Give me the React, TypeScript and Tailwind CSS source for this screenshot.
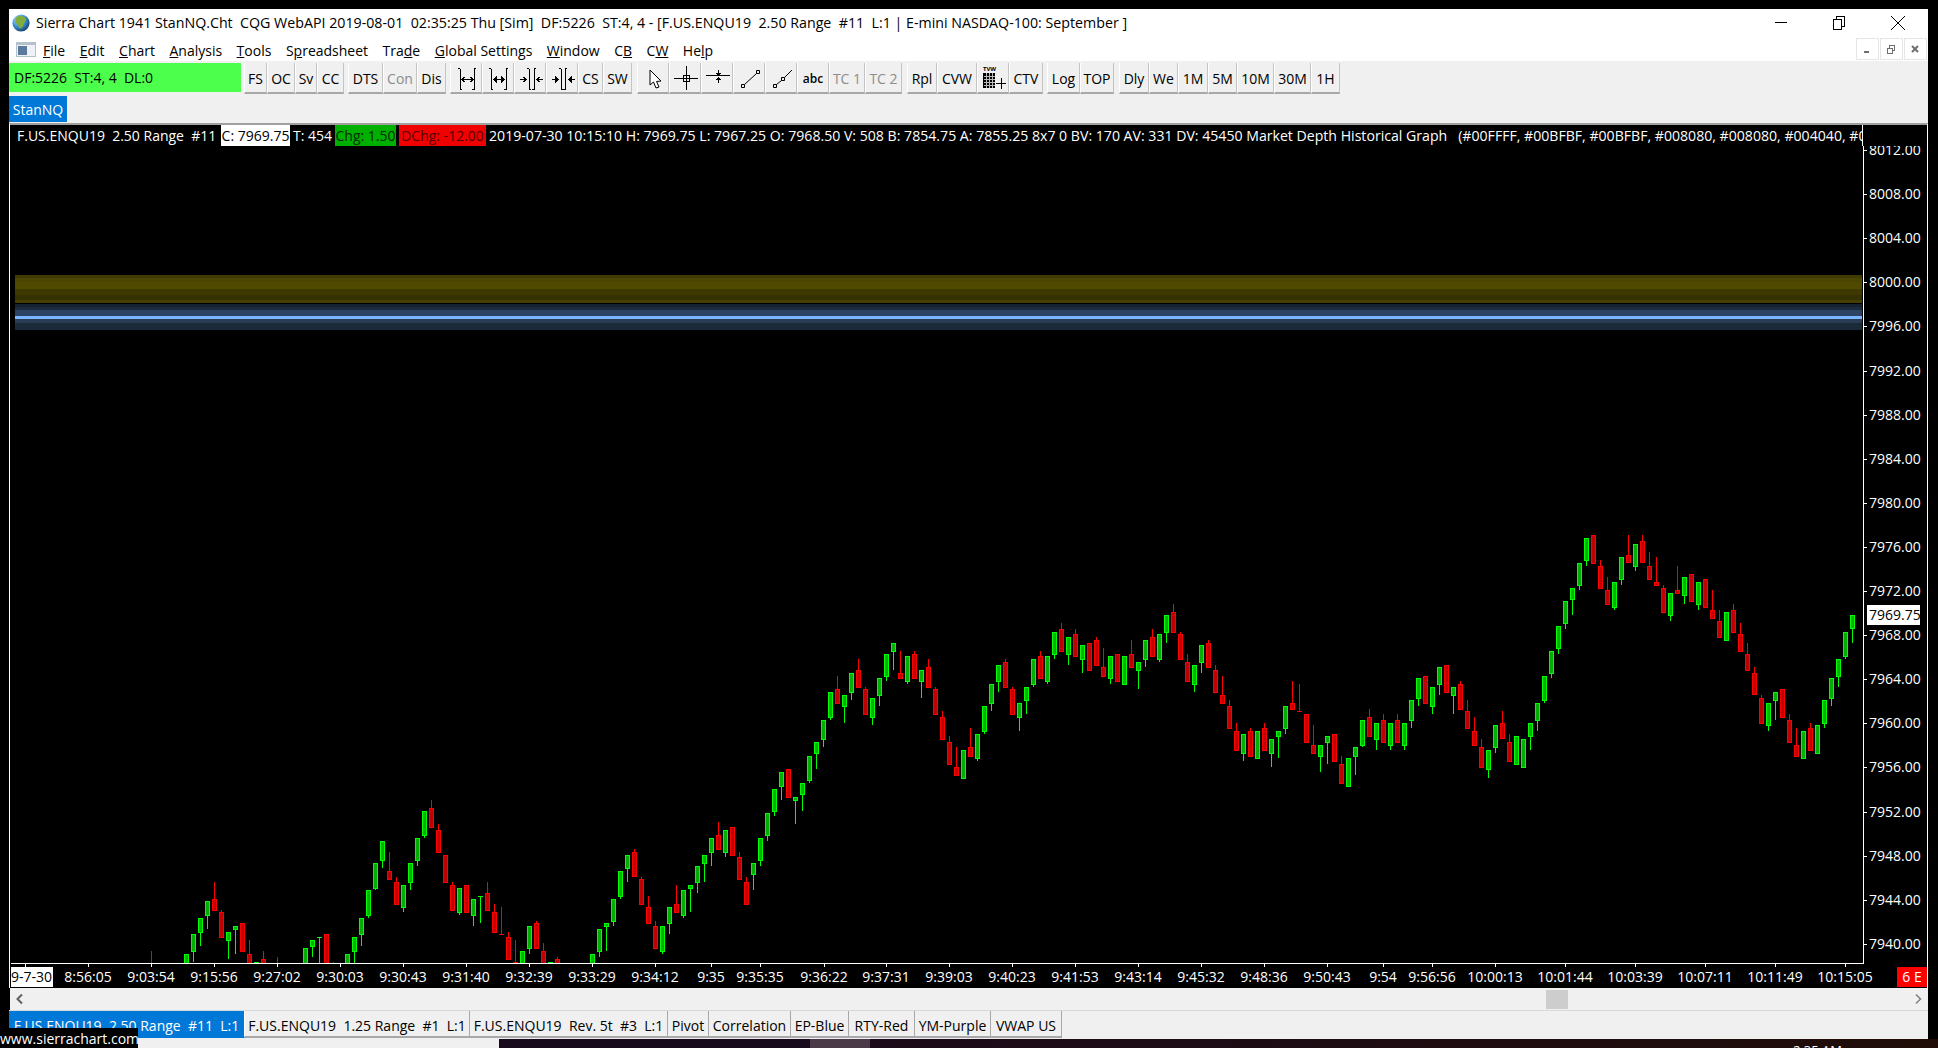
type Row = [number, number, number, number, number] | null;

// g, wickTop, bodyTop, bodyBottom, wickBottom: read off the chart in crop coordinates
const early: Row[] = [
  [0, 513, 600, 600, 600], null, null, null, null,
  [1, 523, 523, 600, 600], [1, 463, 463, 515, 545], [1, 415, 415, 458, 497], [1, 364, 364, 407, 446],
  [0, 306, 358, 392, 392], [0, 390, 397, 473, 473], [1, 457, 457, 482, 537], [1, 439, 439, 449, 521],
  [0, 430, 430, 515, 515], [0, 480, 523, 600, 600], [1, 547, 547, 600, 600], [0, 513, 538, 600, 600], null,
  [0, 531, 600, 600, 600], null, null, null,
  [1, 505, 505, 600, 600], [1, 481, 481, 500, 530], [1, 472, 472, 472, 600], [0, 463, 463, 600, 600],
  [0, 546, 600, 600, 600], null,
  [1, 523, 523, 600, 600], [1, 472, 472, 515, 600], [1, 415, 415, 464, 497], [1, 331, 331, 407, 413],
  [1, 250, 250, 326, 329], [1, 184, 184, 242, 263], [0, 216, 274, 299, 299], [0, 292, 307, 374, 374],
  [1, 316, 316, 383, 395], [1, 250, 250, 308, 329], [1, 175, 175, 242, 257], [1, 94, 94, 167, 173],
  [0, 60, 85, 143, 143], [0, 133, 151, 218, 218], [0, 226, 226, 308, 308], [0, 307, 316, 392, 392],
  [1, 325, 325, 398, 404], [0, 316, 316, 398, 398], [1, 358, 358, 407, 437], [1, 349, 349, 349, 428],
  [0, 306, 340, 392, 392], [0, 373, 397, 458, 458], [0, 381, 463, 463, 463], [0, 457, 472, 539, 539],
  [0, 480, 547, 600, 600], [1, 514, 514, 600, 600], [1, 439, 439, 506, 521], [0, 424, 430, 506, 506],
  [0, 489, 514, 600, 600], [1, 547, 547, 600, 600], [0, 531, 538, 600, 600], null, null, null, null,
  [1, 523, 523, 600, 600], [1, 448, 448, 515, 530], [1, 430, 430, 440, 512], [1, 358, 358, 425, 437],
  [1, 274, 274, 350, 356], [1, 226, 226, 266, 305], [0, 208, 217, 292, 292], [0, 292, 298, 374, 374],
  [0, 349, 382, 431, 431],
];

const dip: Row[] = [
  [0, 213, 229, 296, 296], [1, 229, 229, 305, 311], [1, 172, 172, 221, 251], [0, 106, 163, 188, 188],
  [1, 121, 121, 197, 203], [1, 106, 106, 116, 185], [1, 49, 49, 98, 128], [1, 16, 16, 41, 95],
];

const rise: Row[] = [
  [1, 655, 655, 698, 737], [0, 606, 646, 689, 689], [1, 631, 631, 698, 710], [0, 622, 622, 707, 707],
  [0, 696, 712, 779, 779], [0, 771, 787, 854, 854], [1, 730, 730, 764, 809],
  [1, 655, 655, 722, 737], [1, 580, 580, 647, 662], [1, 508, 508, 575, 587], [1, 457, 457, 500, 539],
  [0, 448, 448, 533, 533], [1, 532, 532, 542, 611], [1, 490, 490, 524, 572], [1, 409, 409, 482, 488],
  [1, 367, 367, 401, 446], [1, 301, 301, 359, 380], [1, 217, 217, 293, 299], [0, 168, 208, 251, 251],
  [1, 226, 226, 260, 308], [1, 160, 160, 218, 239], [0, 118, 151, 203, 203], [0, 202, 208, 284, 284],
  [1, 235, 235, 293, 314], [1, 175, 175, 227, 257], [1, 103, 103, 170, 182], [1, 70, 70, 95, 149],
  [0, 94, 160, 176, 176], [1, 109, 109, 185, 191], [0, 94, 103, 176, 176], [1, 151, 151, 185, 233],
  [0, 118, 142, 203, 203], [0, 202, 208, 284, 284], [0, 274, 292, 359, 359], [0, 349, 367, 434, 434],
  [0, 381, 442, 467, 467], [1, 391, 391, 476, 476], [0, 324, 382, 410, 410], [1, 343, 343, 416, 422],
  [1, 259, 259, 335, 341], [1, 193, 193, 251, 272], [1, 136, 136, 185, 215], [0, 118, 127, 203, 203],
  [0, 202, 208, 284, 284], [1, 250, 250, 293, 332], [1, 202, 202, 242, 281], [1, 118, 118, 194, 200],
  [0, 94, 109, 176, 176], [1, 109, 109, 185, 191], [1, 37, 37, 104, 116], [0, 10, 28, 95, 95],
  [1, 52, 52, 104, 134], [0, 28, 43, 110, 110], [1, 76, 76, 119, 158], [0, 70, 70, 152, 152],
  [0, 52, 61, 137, 137],
];

const mid: Row[] = [
  [0, 174, 232, 260, 260], [1, 199, 199, 266, 281], [0, 193, 193, 275, 275], [1, 199, 199, 284, 284],
  [0, 151, 193, 233, 233], [1, 217, 217, 242, 296], [1, 151, 151, 209, 230], [0, 118, 142, 200, 200],
  [1, 133, 133, 209, 215], [1, 76, 76, 128, 158], [0, 42, 67, 128, 128], [0, 127, 133, 209, 209],
  [0, 193, 217, 275, 275], [1, 226, 226, 284, 305], [1, 166, 166, 218, 248], [0, 151, 160, 233, 233],
  [0, 226, 241, 308, 308], [0, 258, 316, 341, 341], [0, 331, 349, 416, 416], [0, 400, 424, 482, 482],
  [1, 433, 433, 491, 512], [0, 415, 424, 500, 500], [1, 424, 424, 506, 506], [0, 400, 415, 482, 482],
  [1, 448, 448, 491, 530], [1, 424, 424, 440, 503], [1, 349, 349, 416, 431], [0, 273, 340, 359, 359],
  [0, 282, 364, 364, 364], [0, 373, 373, 458, 458], [0, 406, 466, 491, 491], [1, 466, 466, 500, 545],
  [1, 439, 439, 458, 521], [0, 433, 433, 515, 515], [0, 499, 523, 581, 581], [1, 505, 505, 590, 590],
  [1, 472, 472, 500, 554], [1, 391, 391, 467, 470], [0, 358, 382, 440, 440], [1, 400, 400, 449, 479],
  [0, 373, 391, 458, 458], [1, 400, 400, 467, 479], [0, 373, 391, 458, 458], [1, 400, 400, 467, 479],
  [1, 331, 331, 392, 413], [1, 265, 265, 326, 347], [0, 259, 259, 341, 341], [1, 292, 292, 350, 371],
  [1, 232, 232, 284, 314], [0, 226, 226, 308, 308], [1, 292, 292, 317, 371], [0, 274, 283, 359, 359],
  [0, 331, 364, 416, 416], [0, 382, 424, 467, 467], [0, 448, 472, 533, 533], [1, 481, 481, 539, 563],
  [1, 406, 406, 473, 488],
];

const late: Row[] = [
  [0, 573, 610, 658, 658], [0, 643, 667, 725, 725], [1, 649, 649, 734, 734], [1, 658, 658, 743, 743],
  [1, 610, 610, 650, 689], [1, 550, 550, 602, 632], [1, 469, 469, 542, 548], [1, 394, 394, 461, 473],
  [1, 319, 319, 386, 401], [1, 244, 244, 311, 326], [1, 205, 205, 239, 284], [1, 130, 130, 197, 209],
  [1, 55, 55, 122, 137], [0, 46, 46, 131, 131], [0, 121, 139, 206, 206], [0, 172, 211, 254, 254],
  [1, 187, 187, 263, 269], [1, 112, 112, 179, 194], [0, 46, 106, 130, 130], [1, 73, 73, 140, 152],
  [0, 46, 64, 130, 130], [0, 97, 139, 179, 179], [0, 112, 187, 197, 197], [0, 196, 205, 278, 278],
  [1, 220, 220, 287, 302], [0, 139, 211, 221, 221], [1, 172, 172, 229, 251], [0, 163, 163, 245, 245],
  [1, 187, 187, 254, 269], [0, 178, 178, 263, 263], [0, 211, 271, 296, 296], [0, 271, 304, 353, 353],
  [1, 277, 277, 362, 362], [0, 253, 271, 338, 338], [0, 310, 343, 395, 395], [0, 370, 403, 452, 452],
  [0, 442, 460, 526, 526], [0, 526, 535, 611, 611], [1, 550, 550, 617, 632], [1, 517, 517, 542, 599],
  [0, 508, 508, 593, 593], [0, 583, 601, 668, 668], [0, 625, 676, 710, 710], [1, 634, 634, 716, 716],
  [0, 610, 625, 692, 692], [1, 616, 616, 701, 701], [1, 541, 541, 611, 623], [1, 475, 475, 536, 557],
  [1, 418, 418, 470, 500], [1, 337, 337, 410, 416], [1, 286, 286, 328, 368],
];

function Candles({ rows, start, base }: { rows: Row[]; start: number; base: number }) {
  return (
    <>
      {rows.map((r, k) => {
        if (!r) return null;
        const left = 149 + 7 * (start + k);
        const y = (v: number) => Math.round(base + v / 3);
        const top = y(r[2]);
        const h = Math.max(1, y(r[3]) - top);
        const edge = r[0] ? '#00ff00' : '#ff0000';
        const fill = r[0] ? '#00b000' : '#c00000';
        return (
          <g key={k}>
            <rect x={left + 2} y={y(r[1])} width={1} height={Math.max(0, y(r[4]) - y(r[1]))} fill={edge} />
            <rect x={left} y={top} width={5} height={h} fill={edge} />
            {h > 2 && <rect x={left + 1} y={top + 1} width={3} height={h - 2} fill={fill} />}
          </g>
        );
      })}
    </>
  );
}

const priceLabels = ['8012.00', '8008.00', '8004.00', '8000.00', '7996.00', '7992.00', '7988.00', '7984.00', '7980.00', '7976.00', '7972.00', '7968.00', '7964.00', '7960.00', '7956.00', '7952.00', '7948.00', '7944.00', '7940.00'];

const timeLabels: [string, number][] = [
  ['8:56:05', 88], ['9:03:54', 151], ['9:15:56', 214], ['9:27:02', 277], ['9:30:03', 340], ['9:30:43', 403],
  ['9:31:40', 466], ['9:32:39', 529], ['9:33:29', 592], ['9:34:12', 655], ['9:35', 711], ['9:35:35', 760],
  ['9:36:22', 824], ['9:37:31', 886], ['9:39:03', 949], ['9:40:23', 1012], ['9:41:53', 1075], ['9:43:14', 1138],
  ['9:45:32', 1201], ['9:48:36', 1264], ['9:50:43', 1327], ['9:54', 1383], ['9:56:56', 1432], ['10:00:13', 1495],
  ['10:01:44', 1565], ['10:03:39', 1635], ['10:07:11', 1705], ['10:11:49', 1775], ['10:15:05', 1845],
];

const bands: [number, number, string][] = [
  [275, 278, '#3f3a00'], [278, 282, '#4a4500'], [282, 289, '#4f4a00'], [289, 295, '#3d3900'], [295, 300, '#353100'], [300, 303, '#454000'],
  [304, 307, '#162230'], [307, 310, '#1e2c40'], [310, 316, '#2b4263'], [316, 319, '#78b4ff'],
  [319, 323, '#2a3c54'], [323, 330, '#1b2a38'],
];

function Chart() {
  return (
    <svg viewBox="10 146 1917 842" className="block w-[1917px] h-[842px]" shapeRendering="crispEdges">
      <defs>
        <clipPath id="plot">
          <rect x="10" y="146" width="1853" height="817" />
        </clipPath>
      </defs>
      {bands.map(([a, b, c]) => (
        <rect key={a} x="15" y={a} width="1847" height={b - a} fill={c} />
      ))}
      <g clipPath="url(#plot)">
        <Candles rows={early} start={0} base={780} />
        <Candles rows={dip} start={72} base={850} />
        <Candles rows={rise} start={80} base={620} />
        <Candles rows={mid} start={136} base={590} />
        <Candles rows={late} start={193} base={520} />
      </g>
      <rect x="1863" y="146" width="1" height="818" fill="#fff" />
      <rect x="11" y="963" width="1853" height="1" fill="#fff" />
      {priceLabels.map((p, i) => (
        <g key={p}>
          <rect x="1864" y={Math.round(150 + i * 44.1)} width="3" height="1" fill="#fff" />
          <text x="1869" y={155 + i * 44.1} fontSize="14" fill="#fff" shapeRendering="auto">{p}</text>
        </g>
      ))}
      <rect x="1867" y="605" width="53" height="20" fill="#fff" />
      <text x="1869" y="620" fontSize="14" fill="#000">7969.75</text>

      <rect x="25" y="963" width="1" height="4" fill="#fff" />
      {timeLabels.map(([t, x]) => (
        <g key={t}>
          <rect x={x} y="963" width="1" height="4" fill="#fff" />
          <text x={x} y="982" fontSize="14" fill="#fff" textAnchor="middle">{t}</text>
        </g>
      ))}
      <rect x="11" y="967" width="42" height="20" fill="#fff" />
      <text x="52" y="982" fontSize="14" fill="#000" textAnchor="end">2019-7-30</text>
      <rect x="1897" y="967" width="30" height="20" fill="#ff0000" />
      <text x="1912" y="982" fontSize="14" fill="#fff" textAnchor="middle">6 E</text>
    </svg>
  );
}

function Globe() {
  return (
    <svg width="18" height="18" viewBox="0 0 18 18" className="shrink-0">
      <defs>
        <radialGradient id="sea" cx="35%" cy="30%" r="75%">
          <stop offset="0%" stopColor="#bfe6ff" />
          <stop offset="55%" stopColor="#3b8fd0" />
          <stop offset="100%" stopColor="#123f6e" />
        </radialGradient>
      </defs>
      <circle cx="9" cy="9" r="8.6" fill="url(#sea)" />
      <path d="M5 2.5 C8 1.5 12 2 14 4.5 C15 7 12 8 11.5 10.5 C11 13 9 15.5 7.5 14 C7 11.5 4.5 10.5 3.5 8.5 C3 6 3.5 4 5 2.5 Z" fill="#7fae3a" />
    </svg>
  );
}

const stroke = { stroke: '#000', strokeWidth: 1, fill: 'none' };

function Bars({ a, b }: { a: number; b: number }) {
  return (
    <>
      <path d={`M${a + 0.5} 6.5V27.5M${a - 2} 6.5H${a}M${a} 27.5H${a + 2}`} {...stroke} />
      <path d={`M${b + 0.5} 6.5V27.5M${b - 2} 27.5H${b}M${b} 6.5H${b + 2}`} {...stroke} />
    </>
  );
}

const icons: Record<string, React.ReactNode> = {
  width: (
    <>
      <Bars a={10} b={24} />
      <path d="M12 17.5H23M14.5 15L12 17.5L14.5 20M20.5 15L23 17.5L20.5 20" {...stroke} />
    </>
  ),
  widthSolid: (
    <>
      <Bars a={9} b={24} />
      <path d="M14 17.5H20" {...stroke} />
      <path d="M11 17.5L15 14V21ZM23 17.5L19 14V21Z" fill="#000" />
    </>
  ),
  narrow: (
    <>
      <Bars a={15} b={20} />
      <path d="M6 17.5H12M9.5 15L12 17.5L9.5 20M29 17.5H23M25.5 15L23 17.5L25.5 20" {...stroke} />
    </>
  ),
  narrowSolid: (
    <>
      <Bars a={15} b={19} />
      <path d="M6 17.5H10M26 17.5H29" {...stroke} />
      <path d="M13 17.5L9 14V21ZM22 17.5L26 14V21Z" fill="#000" />
    </>
  ),
  pointer: <path d="M13 8V23L16.5 20L19 26L22 25L19.5 19.5L24 19Z" stroke="#000" fill="#fff" shapeRendering="auto" />,
  cross: <path d="M5 16.5H29M17.5 4V28M14.5 13.5H20.5V19.5H14.5Z" {...stroke} />,
  level: <path d="M5 13.5H29M17.5 8V13M15.5 11L17.5 13L19.5 11M17.5 16V21M15.5 18L17.5 16L19.5 18" {...stroke} />,
  line: <path d="M8.5 22.5H11.5V25.5H8.5ZM23.5 8.5H26.5V11.5H23.5ZM11.5 22.5L23.5 11.5" {...stroke} shapeRendering="auto" />,
  ray: <path d="M8.5 22.5H11.5V25.5H8.5ZM16.5 15.5H19.5V18.5H16.5ZM11.5 22.5L16.5 18.5M19.5 15.5L27 8" {...stroke} shapeRendering="auto" />,
  table: (
    <>
      <text x="6" y="9" fontSize="6" fontWeight="700" fill="#000">TVW</text>
      <rect x="6" y="11" width="12" height="15" fill="#000" />
      <path d="M6.5 14.5H18M6.5 17.5H18M6.5 20.5H18M6.5 23.5H18M9.5 11V26M12.5 11V26M15.5 11V26" stroke="#bbb" strokeWidth="1" />
      <path d="M19 21.5H29M24.5 16V27" {...stroke} />
    </>
  ),
};

type Btn = { t?: string; i?: string; w: number; dim?: boolean; small?: boolean };

const groups: Btn[][] = [
  [{ t: 'FS', w: 23 }, { t: 'OC', w: 28 }, { t: 'Sv', w: 22 }, { t: 'CC', w: 27 }],
  [{ t: 'DTS', w: 35 }, { t: 'Con', w: 34, dim: true }, { t: 'Dis', w: 29 }],
  [{ i: 'width', w: 32 }, { i: 'widthSolid', w: 32 }, { i: 'narrow', w: 32 }, { i: 'narrowSolid', w: 32 }, { t: 'CS', w: 25 }, { t: 'SW', w: 29 }],
  [{ i: 'pointer', w: 32 }, { i: 'cross', w: 32 }, { i: 'level', w: 32 }, { i: 'line', w: 32 }, { i: 'ray', w: 32 }, { t: 'abc', w: 32, small: true }, { t: 'TC 1', w: 36, dim: true }, { t: 'TC 2', w: 37, dim: true }],
  [{ t: 'Rpl', w: 30 }, { t: 'CVW', w: 40 }, { i: 'table', w: 32 }, { t: 'CTV', w: 34 }],
  [{ t: 'Log', w: 33 }, { t: 'TOP', w: 34 }],
  [{ t: 'Dly', w: 30 }, { t: 'We', w: 29 }, { t: '1M', w: 30 }, { t: '5M', w: 29 }, { t: '10M', w: 37 }, { t: '30M', w: 37 }, { t: '1H', w: 29 }],
];

const groupGaps = ['mr-[4px]', 'mr-[4px]', 'mr-[5px]', 'mr-[5px]', 'mr-[4px]', 'mr-[5px]', ''];

function Toolbar() {
  return (
    <div className="h-[34px] bg-[#f0f0f0] flex items-start pt-[2px]">
      <div className="w-[232px] h-[29px] bg-[#4dff4d] pl-[5px] leading-[30px] whitespace-pre mr-[3px]">DF:5226  ST:4, 4  DL:0</div>
      {groups.map((g, gi) => (
        <div key={gi} className={`flex ${groupGaps[gi]}`}>
          {g.map((b, k) => (
            <div
              key={k}
              style={{ width: b.w }}
              className={`h-[31px] flex items-center justify-center border-r border-b-2 border-r-[#c4c4c4] border-b-[#a8a8a8] border-l border-l-white ${b.i ? '' : 'pt-[2px]'} ${b.dim ? 'text-[#8c8c8c]' : 'text-black'} ${b.small ? 'text-[12px] font-semibold' : ''}`}
            >
              {b.i ? (
                <svg width="32" height="31" viewBox="0 0 32 31" className="shrink-0" shapeRendering="crispEdges">{icons[b.i]}</svg>
              ) : (
                b.t
              )}
            </div>
          ))}
        </div>
      ))}
    </div>
  );
}

const menu: [string, string, string][] = [
  ['', 'F', 'ile'], ['', 'E', 'dit'], ['', 'C', 'hart'], ['', 'A', 'nalysis'], ['', 'T', 'ools'], ['S', 'p', 'readsheet'],
  ['Tra', 'd', 'e'], ['', 'G', 'lobal Settings'], ['', 'W', 'indow'], ['C', 'B', ''], ['C', 'W', ''], ['He', 'l', 'p'],
];

const tabs: [string, number, boolean][] = [
  ['F.US.ENQU19  2.50 Range  #11  L:1', 236, true],
  ['F.US.ENQU19  1.25 Range  #1  L:1', 225, false],
  ['F.US.ENQU19  Rev. 5t  #3  L:1', 198, false],
  ['Pivot', 41, false],
  ['Correlation', 82, false],
  ['EP-Blue', 58, false],
  ['RTY-Red', 66, false],
  ['YM-Purple', 76, false],
  ['VWAP US', 71, false],
];

export default function App() {
  return (
    <div className="relative w-[1938px] h-[1048px] bg-black overflow-hidden flex flex-col font-['Open_Sans',sans-serif] text-[14px] text-black">
      <div className="pt-[9px] pl-[9px] pr-[10px] flex flex-col">
        {/* Title bar */}
        <div className="h-[28px] bg-white flex items-center pl-[3px] whitespace-pre">
          <Globe />
          <span className="ml-[6px] text-[14.22px]">Sierra Chart 1941 StanNQ.Cht  CQG WebAPI 2019-08-01  02:35:25 Thu [Sim]  DF:5226  ST:4, 4 - [F.US.ENQU19  2.50 Range  #11  L:1 | E-mini NASDAQ-100: September ]</span>
          <div className="ml-auto flex items-center pb-[2px]">
            <svg width="150" height="16" viewBox="0 0 150 16" className="mr-[5px]" shapeRendering="crispEdges">
              <path d="M2 8.5H14M60.5 5.5V15.5H68.5V5.5ZM63.5 5.5V2.5H71.5V12.5H68.5" stroke="#000" fill="none" />
              <path d="M118 2L132 16M132 2L118 16" stroke="#000" fill="none" shapeRendering="auto" />
            </svg>
          </div>
        </div>

        {/* Menu */}
        <div className="h-[24px] bg-white flex items-center whitespace-pre">
          <svg width="20" height="15" viewBox="0 0 20 15" className="ml-[7px] mr-[7px] shrink-0">
            <rect width="20" height="15" fill="#b4c0cc" />
            <rect x="1" y="3" width="18" height="11" fill="#eef2f6" />
            <rect x="2" y="4" width="9" height="9" fill="#5a7a9e" />
          </svg>
          <div className="flex gap-[14.5px] pt-[2px]">
            {menu.map(([a, u, b]) => (
              <span key={a + u + b}>{a}<span className="underline">{u}</span>{b}</span>
            ))}
          </div>
          <div className="ml-auto flex gap-px pr-px">
            {['min', 'restore', 'close'].map((k) => (
              <div key={k} className="w-[23px] h-[22px] border border-[#e6e6e6] flex items-center justify-center">
                <svg width="11" height="11" viewBox="0 0 11 11" shapeRendering="crispEdges">
                  {k === 'min' && <rect x="2" y="7" width="5" height="2" fill="#6e6e6e" />}
                  {k === 'restore' && <path d="M1.5 4.5H6.5V9.5H1.5ZM3.5 4V1.5H8.5V6.5H7" stroke="#6e6e6e" fill="none" />}
                  {k === 'close' && <path d="M2 2L8 8M8 2L2 8" stroke="#6e6e6e" strokeWidth="2" fill="none" shapeRendering="auto" />}
                </svg>
              </div>
            ))}
          </div>
        </div>

        <Toolbar />

        {/* Chartbook tab row */}
        <div className="h-[28px] bg-[#f0f0f0] pt-px">
          <div className="w-[58px] h-[26px] bg-[#0078d7] text-white flex items-center justify-center">StanNQ</div>
        </div>

        {/* Chart */}
        <div className="h-[865px] bg-black border-t-2 border-t-[#a0a0a0] border-l border-l-white border-r border-r-white flex flex-col whitespace-pre">
          <div className="h-[21px] flex text-white leading-[21px]">
            <div className="w-[1853px] border-r border-white flex overflow-hidden">
              <span className="w-[211px] pl-[7px] shrink-0">F.US.ENQU19  2.50 Range  #11</span>
              <span className="w-[69px] shrink-0 bg-white text-black text-center">C: 7969.75</span>
              <span className="w-[45px] shrink-0 text-center">T: 454</span>
              <span className="w-[61px] shrink-0 bg-[#00b000] text-[#002a00] text-center">Chg: 1.50</span>
              <span className="w-[3px] shrink-0" />
              <span className="w-[87px] shrink-0 bg-[#f00000] text-[#5a0000] text-center">DChg: -12.00</span>
              <span className="pl-[3px] text-[14.12px]">2019-07-30 10:15:10 H: 7969.75 L: 7967.25 O: 7968.50 V: 508 B: 7854.75 A: 7855.25 8x7 0 BV: 170 AV: 331 DV: 45450 Market Depth Historical Graph   (#00FFFF, #00BFBF, #00BFBF, #008080, #008080, #004040, #004040, #0</span>
            </div>
          </div>
          <Chart />
        </div>

        {/* Scrollbar */}
        <div className="h-[22px] bg-[#f0f0f0] ml-px flex items-center justify-between px-[5px]">
          <svg width="10" height="12" viewBox="0 0 10 12"><path d="M7 1.5L2.5 6L7 10.5" stroke="#606060" strokeWidth="2" fill="none" /></svg>
          <div className="flex items-center">
            <div className="w-[22px] h-[19px] bg-[#cdcdcd] mr-[345px]" />
            <svg width="10" height="12" viewBox="0 0 10 12"><path d="M3 1.5L7.5 6L3 10.5" stroke="#808080" strokeWidth="1.5" fill="none" /></svg>
          </div>
        </div>

        {/* Chart tabs */}
        <div className="h-[29px] bg-[#f0f0f0] border-t border-t-[#d8d8d8] flex">
          {tabs.map(([t, w, active]) => (
            <div
              key={t}
              style={{ width: w }}
              className={`h-[27px] pt-[3px] flex items-center justify-center whitespace-pre border-r border-b-2 ${active ? 'bg-[#0078d7] text-white border-r-white border-b-[#0078d7]' : 'border-r-[#a8a8a8] border-b-[#a8a8a8]'}`}
            >
              {t}
            </div>
          ))}
        </div>
      </div>

      {/* Desktop peeking out under the window */}
      <div className="h-[9px] flex overflow-hidden">
        <div className="w-[499px] bg-[#f0f0f0]" />
        <div className="w-[311px] bg-[#170a1c]" />
        <div className="w-[60px] bg-[#4a3a48]" />
        <div className="flex-1 bg-gradient-to-r from-[#1c0a1a] to-[#200d08] pl-[923px] pt-[2px] text-white text-[13px] leading-[18px] whitespace-pre">2:35 AM</div>
      </div>

      <div className="absolute left-0 bottom-0 w-[138px] h-[20px] bg-black text-white leading-[21px] whitespace-pre">www.sierrachart.com</div>
    </div>
  );
}
